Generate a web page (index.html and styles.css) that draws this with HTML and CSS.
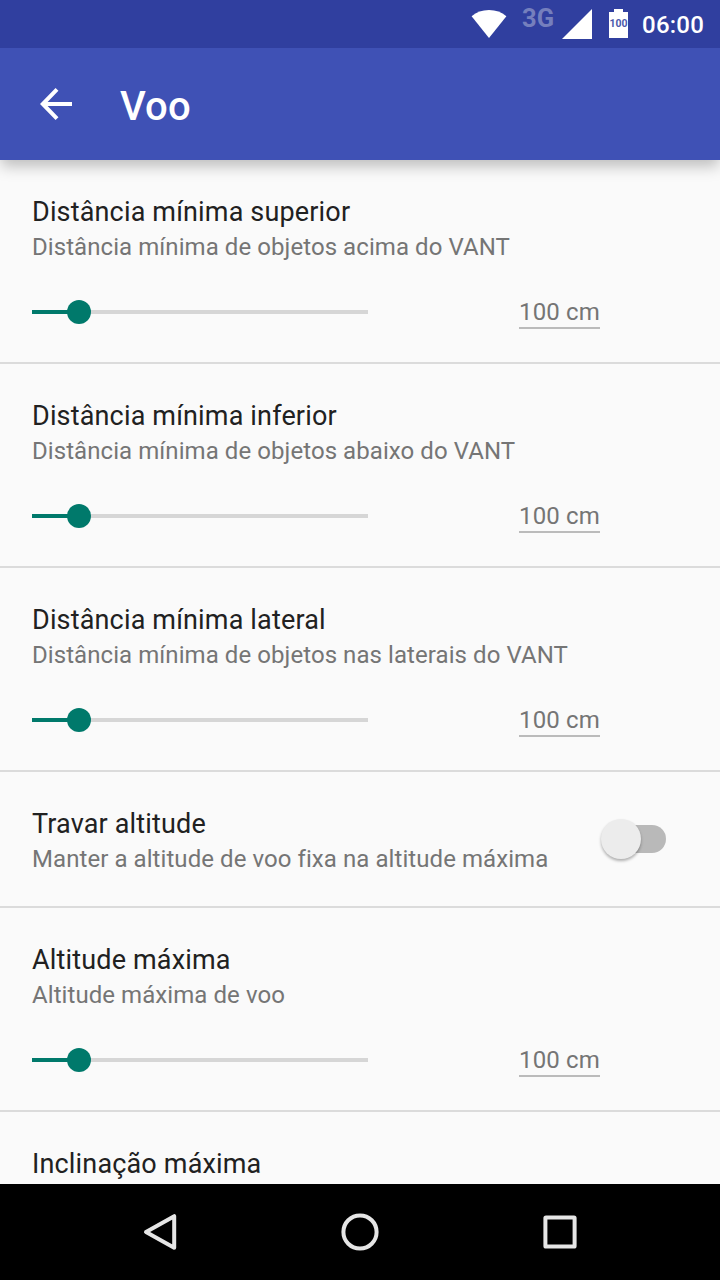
FILE: index.html
```html
<!DOCTYPE html>
<html lang="pt-BR">
<head>
<meta charset="utf-8">
<title>Voo</title>
<link rel="stylesheet" href="styles.css">
</head>
<body>
<div class="screen">
  <header class="status-bar">
    <svg class="wifi" width="36" height="30" viewBox="0 0 36 30"><path d="M.6 7.2Q7.8 1 18 1t17.4 6.2L18 29z" fill="#fff"/></svg>
    <span class="network">3G</span>
    <svg class="signal" width="30" height="30" viewBox="0 0 30 30"><path d="M30 0v30H0z" fill="#fff"/></svg>
    <span class="battery">
      <svg width="19" height="29" viewBox="0 0 19 29"><path d="M5 0h9v3h5v26H0V3h5z" fill="#fff"/></svg>
      <span class="battery-level">100</span>
    </span>
    <span class="clock">06:00</span>
  </header>
  <div class="toolbar">
    <svg class="back" width="32" height="32" viewBox="0 0 32 32"><path d="M32 16H3M17 1.4L2.8 16 17 30.6" fill="none" stroke="#fff" stroke-width="4"/></svg>
    <h1 class="toolbar-title">Voo</h1>
  </div>
  <main class="settings">
    <section class="item">
      <h2 class="title">Distância mínima superior</h2>
      <p class="summary">Distância mínima de objetos acima do VANT</p>
      <div class="control"><div class="slider"><div class="fill"></div><div class="thumb"></div></div><span class="value">100 cm</span></div>
    </section>
    <section class="item">
      <h2 class="title">Distância mínima inferior</h2>
      <p class="summary">Distância mínima de objetos abaixo do VANT</p>
      <div class="control"><div class="slider"><div class="fill"></div><div class="thumb"></div></div><span class="value">100 cm</span></div>
    </section>
    <section class="item">
      <h2 class="title">Distância mínima lateral</h2>
      <p class="summary">Distância mínima de objetos nas laterais do VANT</p>
      <div class="control"><div class="slider"><div class="fill"></div><div class="thumb"></div></div><span class="value">100 cm</span></div>
    </section>
    <section class="item switch-item">
      <div>
        <h2 class="title">Travar altitude</h2>
        <p class="summary">Manter a altitude de voo fixa na altitude máxima</p>
      </div>
      <div class="switch"><div class="knob"></div></div>
    </section>
    <section class="item">
      <h2 class="title">Altitude máxima</h2>
      <p class="summary">Altitude máxima de voo</p>
      <div class="control"><div class="slider"><div class="fill"></div><div class="thumb"></div></div><span class="value">100 cm</span></div>
    </section>
    <section class="item">
      <h2 class="title">Inclinação máxima</h2>
    </section>
  </main>
  <nav class="nav-bar">
    <svg width="40" height="40" viewBox="0 0 40 40"><path d="M34.2 3.2v31.6L6 19z"/></svg>
    <svg width="40" height="40" viewBox="0 0 40 40"><circle cx="20" cy="19" r="16.6"/></svg>
    <svg width="40" height="40" viewBox="0 0 40 40"><rect x="5.4" y="4.4" width="29.2" height="29.2" rx=".6"/></svg>
  </nav>
</div>
</body>
</html>
```
FILE: styles.css
```css
* { box-sizing: border-box; }
body, h1, h2, p { margin: 0; }
body { font-family: Roboto, "Liberation Sans", sans-serif; background: #fafafa; }
svg { display: block; flex: none; }
.screen { width: 720px; height: 1280px; display: flex; flex-direction: column; overflow: hidden; }
.status-bar {
  position: relative; z-index: 2;
  height: 48px; flex: none; display: flex; align-items: flex-start;
  padding-right: 16px; justify-content: flex-end; background: #303f9f; color: #fff;
}
.wifi { margin-top: 9px; }
.network {
  width: 33px; margin: 2px 7px 0 15px; font-size: 25.5px; line-height: 32px;
  font-weight: 700; color: #757fbd; white-space: nowrap;
}
.signal { margin-top: 9px; }
.battery { position: relative; margin: 9px 0 0 17px; width: 19px; }
.battery-level {
  position: absolute; left: 0; top: 9px; width: 19px; text-align: center;
  font-size: 10.5px; line-height: 12px; font-weight: 700; color: #4c59ab;
}
.clock { margin: 9px 0 0 14px; font-size: 24px; line-height: 32px; font-weight: 500; letter-spacing: .2px; }
.toolbar {
  position: relative; z-index: 1; height: 112px; flex: none; display: flex; align-items: center;
  padding-left: 40px; background: #3f51b5; color: #fff;
  box-shadow: 0 7px 14px -1px rgba(0, 0, 0, .25);
}
.toolbar-title { margin: 6px 0 0 48px; font-size: 40px; line-height: 48px; font-weight: 500; letter-spacing: .2px; }
.settings { flex: 1; overflow: hidden; min-height: 0; }
.item { height: 204px; padding: 33px 32px 0; border-bottom: 2px solid #dbdbdb; }
.title { font-size: 27px; line-height: 38px; font-weight: 400; color: #212121; letter-spacing: .16px; }
.summary { font-size: 24px; line-height: 32px; color: #757575; white-space: nowrap; letter-spacing: .07px; }
.control { display: flex; align-items: flex-start; justify-content: space-between; margin-top: 29px; padding-right: 88px; }
.slider { position: relative; width: 336px; height: 4px; margin-top: 18px; background: #d6d6d6; }
.fill { width: 47px; height: 4px; background: #00796b; }
.thumb { position: absolute; left: 35px; top: -10px; width: 24px; height: 24px; border-radius: 50%; background: #00796b; }
.value { height: 37px; padding-top: 4px; font-size: 24px; line-height: 32px; color: #757575; border-bottom: 2px solid #bbb; letter-spacing: .15px; }
.switch-item { height: 136px; display: flex; justify-content: space-between; }
.switch { position: relative; width: 62px; height: 28px; margin: 20px 22px 0 0; border-radius: 14px; background: #b9b9b9; }
.knob {
  position: absolute; left: -3px; top: -6px; width: 40px; height: 40px; border-radius: 50%;
  background: #ececec; box-shadow: 0 2px 3px rgba(0, 0, 0, .3);
}
.nav-bar {
  height: 96px; flex: none; display: flex; justify-content: center; gap: 160px;
  padding-top: 29px; background: #000;
}
.nav-bar path, .nav-bar circle, .nav-bar rect { fill: none; stroke: #e6e6e6; stroke-width: 4; stroke-linejoin: round; }
```
